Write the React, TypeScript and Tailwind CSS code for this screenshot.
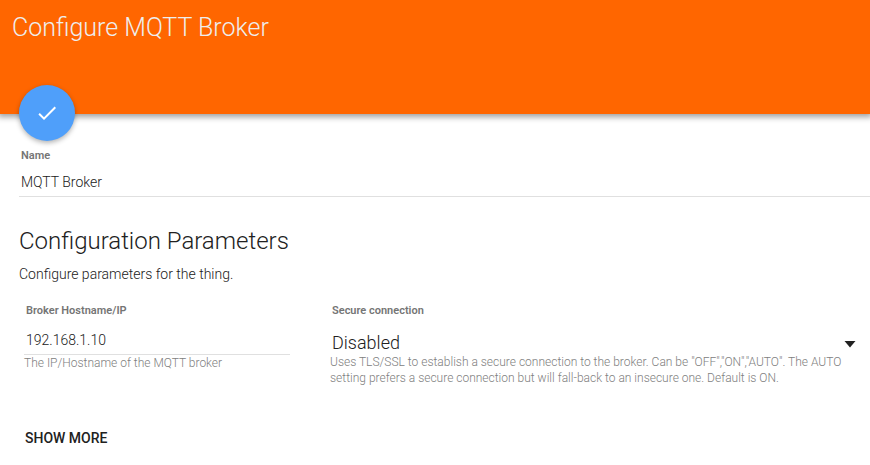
const labelClass = "block px-[2px] text-[11px] leading-4 font-semibold text-[#757575]";
const inputClass =
  "block h-7 w-full bg-transparent px-[2px] text-sm font-light text-[#212121] outline-none";
const helpClass = "text-xs leading-4 font-light text-[#808080]";

export default function App() {
  return (
    <main className="min-h-screen bg-white font-['Roboto','Noto_Sans',sans-serif] text-[#212121]">
      <header className="h-[114px] bg-[#ff6600] px-3 pt-[9px] shadow-[0_1px_6px_2px_rgba(0,0,0,0.38)]">
        <h1 className="text-[25px] leading-[38px] font-light text-[#eeeeee]">Configure MQTT Broker</h1>
      </header>
      <form className="-mt-[29px] pl-[19px]" onSubmit={(e) => e.preventDefault()}>
        <button
          type="submit"
          aria-label="Save"
          className="flex size-14 items-center justify-center rounded-full bg-[#4f9ffa] shadow-[0_2px_5px_rgba(0,0,0,0.3)]"
        >
          <svg viewBox="0 0 24 24" className="size-6 fill-white" aria-hidden="true">
            <path d="M9 16.17 4.83 12l-1.42 1.41L9 19 21 7l-1.41-1.41z" />
          </svg>
        </button>
        <div className="mt-[7px] border-b border-[#e0e0e0]">
          <label htmlFor="name" className={labelClass}>Name</label>
          <input id="name" defaultValue="MQTT Broker" className={`mt-1 ${inputClass}`} />
        </div>
        <h2 className="mt-7 text-2xl leading-8 font-light">Configuration Parameters</h2>
        <p className="mt-[7px] text-sm leading-5 font-light">Configure parameters for the thing.</p>
        <div className="mt-[19px] grid grid-cols-[minmax(0,1fr)_minmax(0,2fr)] gap-10 pr-2 pl-[5px]">
          <div>
            <label htmlFor="host" className={labelClass}>Broker Hostname/IP</label>
            <div className="mt-[7px] border-b border-[#e0e0e0]">
              <input id="host" defaultValue="192.168.1.10" className={inputClass} />
            </div>
            <p className={helpClass}>The IP/Hostname of the MQTT broker</p>
          </div>
          <div>
            <label htmlFor="secure" className={labelClass}>Secure connection</label>
            <div className="relative mt-3">
              <select
                id="secure"
                defaultValue="OFF"
                className="block h-[23px] w-full appearance-none bg-transparent px-[2px] text-lg leading-6 font-light outline-none"
              >
                <option value="OFF">Disabled</option>
                <option value="ON">Enabled</option>
                <option value="AUTO">Auto</option>
              </select>
              <svg
                viewBox="0 0 12 7"
                className="pointer-events-none absolute top-[10px] right-1.5 h-[7px] w-3 fill-[#212121]"
                aria-hidden="true"
              >
                <path d="M.5 0h11L6 6.5z" />
              </svg>
            </div>
            <p className={helpClass}>
              Uses TLS/SSL to establish a secure connection to the broker. Can be "OFF","ON","AUTO". The AUTO
              setting prefers a secure connection but will fall-back to an insecure one. Default is ON.
            </p>
          </div>
        </div>
        <button type="button" className="mt-[34px] h-9 px-1.5 text-sm font-medium uppercase">Show more</button>
      </form>
    </main>
  );
}
